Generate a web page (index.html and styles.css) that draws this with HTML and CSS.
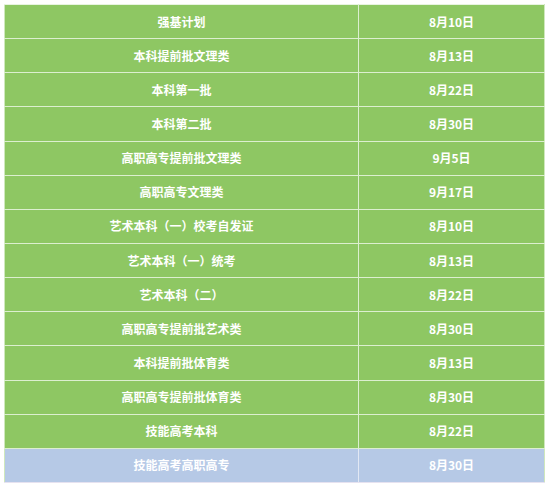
FILE: index.html
```html
<!DOCTYPE html>
<html lang="zh">
<head>
<meta charset="utf-8">
<link rel="stylesheet" href="styles.css">
</head>
<body>
<table class="sched">
<colgroup><col class="c1"><col class="c2"></colgroup>
<tbody>
<tr><td>强基计划</td><td>8月10日</td></tr>
<tr><td>本科提前批文理类</td><td>8月13日</td></tr>
<tr><td>本科第一批</td><td>8月22日</td></tr>
<tr><td>本科第二批</td><td>8月30日</td></tr>
<tr><td>高职高专提前批文理类</td><td>9月5日</td></tr>
<tr><td>高职高专文理类</td><td>9月17日</td></tr>
<tr><td>艺术本科（一）校考自发证</td><td>8月10日</td></tr>
<tr><td>艺术本科（一）统考</td><td>8月13日</td></tr>
<tr><td>艺术本科（二）</td><td>8月22日</td></tr>
<tr><td>高职高专提前批艺术类</td><td>8月30日</td></tr>
<tr><td>本科提前批体育类</td><td>8月13日</td></tr>
<tr><td>高职高专提前批体育类</td><td>8月30日</td></tr>
<tr><td>技能高考本科</td><td>8月22日</td></tr>
<tr class="last"><td>技能高考高职高专</td><td>8月30日</td></tr>
</tbody>
</table>
</body>
</html>
```
FILE: styles.css
```css
html, body { margin: 0; padding: 0; background: #ffffff; }
body { padding: 4px 0 0 4px; }
.sched {
  border-collapse: collapse;
  width: 540px;
  height: 479px;
  table-layout: fixed;
  font-family: "Microsoft YaHei", "Noto Sans CJK SC", sans-serif;
  font-size: 12px;
  font-weight: 700;
  color: #ffffff;
}
.c1 { width: 354px; }
.c2 { width: 186px; }
.sched td {
  background: #8ec763;
  border: 1px solid #dcefcf;
  text-align: center;
  vertical-align: middle;
  padding: 0;
  line-height: 16px;
}
.sched tr:first-child td { border-top-color: #e8f4e0; }
.sched td:first-child { border-left-color: #cfe8bd; }
.sched td:last-child { border-right-color: #cfe8bd; }
.sched tr.last td { background: #b6c9e6; border-bottom-color: #e6e2f0; }
.sched tr.last td:first-child { border-right-color: #e2e8f4; }
```
